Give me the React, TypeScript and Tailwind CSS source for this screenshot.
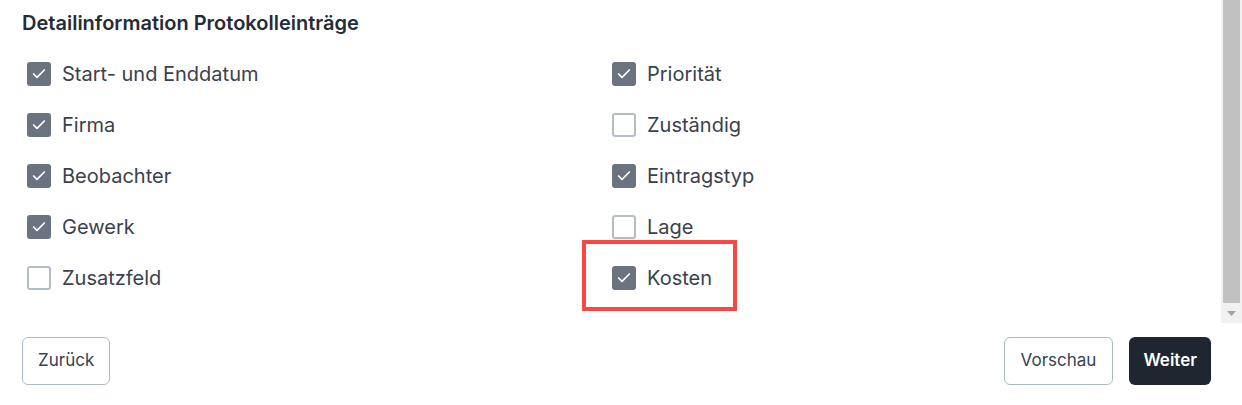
import { Check } from 'lucide-react'

const leftItems = [
  { label: 'Start- und Enddatum', checked: true },
  { label: 'Firma', checked: true },
  { label: 'Beobachter', checked: true },
  { label: 'Gewerk', checked: true },
  { label: 'Zusatzfeld', checked: false },
]

const rightItems = [
  { label: 'Priorität', checked: true },
  { label: 'Zuständig', checked: false },
  { label: 'Eintragstyp', checked: true },
  { label: 'Lage', checked: false },
  { label: 'Kosten', checked: true, highlight: true },
]

type Item = { label: string; checked: boolean; highlight?: boolean }

function CheckRow({ item }: { item: Item }) {
  return (
    <label className="relative flex items-center h-[51px] pl-[5px]">
      {item.checked ? (
        <span className="flex items-center justify-center w-6 h-6 rounded-[3px] bg-[#6b7280]">
          <Check className="w-4 h-4 text-white" strokeWidth={2.5} />
        </span>
      ) : (
        <span className="w-6 h-6 rounded-[3px] border-2 border-[#b4bcc8] bg-white" />
      )}
      <span className="ml-[11px] text-[20px] text-[#3a414d]">{item.label}</span>
      {item.highlight && (
        <span className="absolute left-[-25px] top-[-12px] w-[155px] h-[71px] border-4 border-[#ff4444]" />
      )}
    </label>
  )
}

export default function App() {
  return (
    <div className="w-[1242px] h-[405px] bg-white font-['Inter',sans-serif] flex flex-col">
      <div className="flex h-[323px]">
        <div className="flex-1 pl-[22px] pr-[22px] pt-[11px]">
          <h3 className="text-[20px] font-semibold text-[#252c37] leading-[24px]">
            Detailinformation Protokolleinträge
          </h3>
          <div className="grid grid-cols-[585px_585px] mt-[13px]">
            <div className="flex flex-col">
              {leftItems.map((item) => (
                <CheckRow key={item.label} item={item} />
              ))}
            </div>
            <div className="flex flex-col">
              {rightItems.map((item) => (
                <CheckRow key={item.label} item={item} />
              ))}
            </div>
          </div>
        </div>
        {/* scrollbar */}
        <div className="w-[21px] bg-[#f1f1f1] flex flex-col items-center">
          <div className="w-[17px] h-[303px] bg-[#c1c1c1]" />
          <div className="flex-1 flex items-center justify-center">
            <svg width="9" height="5" viewBox="0 0 9 5">
              <path d="M0 0h9L4.5 5z" fill="#a3a3a3" />
            </svg>
          </div>
        </div>
      </div>
      <div className="flex items-center justify-between pl-[22px] pr-[31px] pt-[14px]">
        <button className="h-[48px] px-[15px] rounded-md border border-[#aeb8c6] text-[17px] text-[#374151]">
          Zurück
        </button>
        <div className="flex gap-[16px]">
          <button className="h-[48px] px-[16px] rounded-md border border-[#aeb8c6] text-[17px] text-[#374151]">
            Vorschau
          </button>
          <button className="h-[48px] px-[14px] rounded-md bg-[#1f2630] text-[17px] font-semibold text-white">
            Weiter
          </button>
        </div>
      </div>
    </div>
  )
}
